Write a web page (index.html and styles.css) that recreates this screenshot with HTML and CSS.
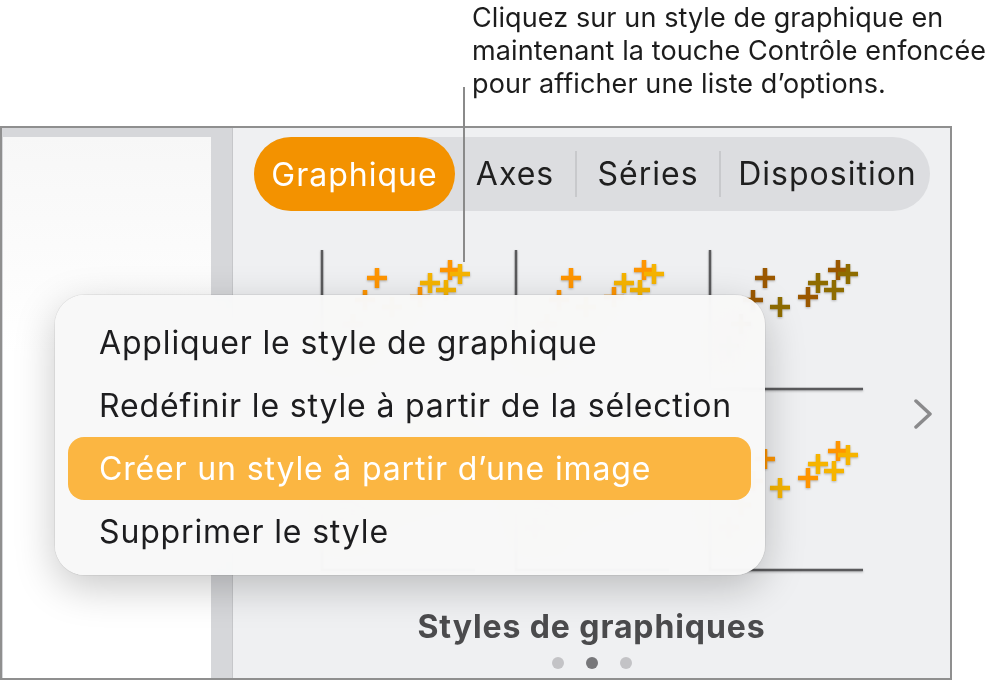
FILE: index.html
```html
<!DOCTYPE html>
<html lang="fr"><head>
    <meta charset="UTF-8">
    <title>Styles de graphiques</title>
    <link rel="stylesheet" href="styles.css">
</head>
<body>
    <svg class="defs" width="0" height="0">
        <defs>
            <path id="plus" d="M-10 0H10M0-10V10"/>
            <g id="scatter-warm" stroke-width="4.5">
                <use href="#plus" x="20" y="96" stroke="#f6b400"/>
                <use href="#plus" x="32" y="74" stroke="#ff9500"/>
                <use href="#plus" x="56" y="28" stroke="#ff9500"/>
                <use href="#plus" x="44" y="50" stroke="#ff9500"/>
                <use href="#plus" x="71" y="57" stroke="#f6b400"/>
                <use href="#plus" x="99" y="47" stroke="#ff9500"/>
                <use href="#plus" x="109" y="33" stroke="#f6b400"/>
                <use href="#plus" x="125" y="40" stroke="#f6b400"/>
                <use href="#plus" x="129" y="20" stroke="#ff9500"/>
                <use href="#plus" x="139" y="24" stroke="#f6b400"/>
            </g>
            <g id="scatter-brown" stroke-width="4.5">
                <use href="#plus" x="20" y="96" stroke="#8e6c00"/>
                <use href="#plus" x="32" y="74" stroke="#9b5800"/>
                <use href="#plus" x="56" y="28" stroke="#9b5800"/>
                <use href="#plus" x="44" y="50" stroke="#9b5800"/>
                <use href="#plus" x="71" y="57" stroke="#8e6c00"/>
                <use href="#plus" x="99" y="47" stroke="#9b5800"/>
                <use href="#plus" x="109" y="33" stroke="#8e6c00"/>
                <use href="#plus" x="125" y="40" stroke="#8e6c00"/>
                <use href="#plus" x="129" y="20" stroke="#9b5800"/>
                <use href="#plus" x="139" y="24" stroke="#8e6c00"/>
            </g>
        </defs>
    </svg>

    <div class="callout">
        <p>Cliquez sur un style de graphique en<br>maintenant la touche Contrôle enfoncée<br>pour afficher une liste d’options.</p>
    </div>
    <span class="leader"></span>

    <div class="window">
        <div class="sidebar">
            <div class="sheet"></div>
        </div>
        <div class="inspector">
            <div class="tabs">
                <span class="tab active">Graphique</span>
                <span class="tab tab-axes">Axes</span>
                <span class="sep"></span>
                <span class="tab tab-series">Séries</span>
                <span class="sep"></span>
                <span class="tab tab-layout">Disposition</span>
            </div>

            <div class="styles-row">
                <div class="style-grid">
                    <svg class="thumb" width="194" height="181"><path class="axis" d="M1 0V139H154"/><use href="#scatter-warm"/></svg>
                    <svg class="thumb" width="194" height="181"><path class="axis" d="M1 0V139H154"/><use href="#scatter-warm"/></svg>
                    <svg class="thumb" width="194" height="181"><path class="axis" d="M1 0V139H154"/><use href="#scatter-brown"/></svg>
                    <svg class="thumb" width="194" height="181"><path class="axis" d="M1 0V139H154"/><use href="#scatter-warm"/></svg>
                    <svg class="thumb" width="194" height="181"><path class="axis" d="M1 0V139H154"/><use href="#scatter-warm"/></svg>
                    <svg class="thumb" width="194" height="181"><path class="axis" d="M1 0V139H154"/><use href="#scatter-warm"/></svg>
                </div>
                <svg class="chevron" width="20" height="30" viewBox="0 0 20 30"><path d="M3 2L17 15L3 28"/></svg>
            </div>

            <h3 class="panel-title">Styles de graphiques</h3>
            <div class="dots">
                <span></span>
                <span class="on"></span>
                <span></span>
            </div>
        </div>
    </div>

    <ul class="context-menu">
        <li>Appliquer le style de graphique</li>
        <li>Redéfinir le style à partir de la sélection</li>
        <li class="selected">Créer un style à partir d’une image</li>
        <li>Supprimer le style</li>
    </ul>
</body>
</html>
```

FILE: styles.css
```css
body {
    font-family: 'Inter', 'Noto Sans', sans-serif;
    margin: 0;
    padding: 0;
    background-color: #ffffff;
    color: #1d1d1f;
    overflow: hidden;
}
.defs {
    position: absolute;
}
.callout p {
    margin: 0;
    padding: 1px 0 0 472px;
    font-size: 27px;
    line-height: 33px;
    letter-spacing: 0.1px;
    color: #1c1c1c;
}
.leader {
    position: absolute;
    left: 463px;
    top: 87px;
    width: 2px;
    height: 175px;
    background-color: #8a8a8a;
    z-index: 2;
}
.window {
    display: flex;
    box-sizing: border-box;
    width: 952px;
    height: 554px;
    margin-top: 26px;
    border: 2px solid #8f8f8f;
}
.sidebar {
    box-sizing: border-box;
    width: 231px;
    padding: 9px 21px 0 1px;
    background-color: #d6d7da;
    border-right: 1px solid #c6c7ca;
}
.sheet {
    height: 100%;
    background: linear-gradient(#f7f7f7, #ffffff 40%);
}
.inspector {
    flex: 1;
    padding-top: 9px;
    background-color: #eff0f2;
}
.tabs {
    display: flex;
    align-items: center;
    width: 676px;
    height: 74px;
    margin-left: 21px;
    border-radius: 37px;
    background-color: #dcdde0;
    font-size: 32px;
    letter-spacing: 1px;
    color: #1f1f1f;
}
.tab {
    box-sizing: border-box;
    text-align: center;
    line-height: 76px;
}
.tab.active {
    width: 201px;
    height: 74px;
    border-radius: 37px;
    background-color: #f39200;
    color: #ffffff;
}
.tab-axes {
    width: 120px;
}
.tab-series {
    width: 142px;
}
.tab-layout {
    flex: 1;
    padding-left: 4px;
}
.sep {
    width: 2px;
    height: 46px;
    background-color: #c8c9cc;
}
.styles-row {
    display: flex;
    margin: 39px 0 0 88px;
}
.style-grid {
    display: grid;
    grid-template-columns: repeat(3, 194px);
    grid-template-rows: 181px 150px;
}
.thumb {
    overflow: visible;
    filter: drop-shadow(0 1px 1px rgba(0,0,0,0.25));
}
.axis {
    fill: none;
    stroke: #5a5a5c;
    stroke-width: 2.5;
}
.chevron {
    margin: 149px 0 0 10px;
}
.chevron path {
    fill: none;
    stroke: #8a8a8c;
    stroke-width: 3.5;
    stroke-linecap: round;
    stroke-linejoin: round;
}
.panel-title {
    margin: 28px 0 0;
    font-size: 32px;
    line-height: 36px;
    font-weight: 700;
    letter-spacing: 0.9px;
    text-align: center;
    color: #4b4b4d;
}
.dots {
    display: flex;
    justify-content: center;
    gap: 22px;
    margin-top: 12px;
}
.dots span {
    width: 12px;
    height: 12px;
    border-radius: 50%;
    background-color: #c3c3c6;
}
.dots span.on {
    background-color: #77777a;
}
.context-menu {
    position: absolute;
    left: 55px;
    top: 295px;
    box-sizing: border-box;
    width: 710px;
    height: 280px;
    margin: 0;
    padding: 16px 14px 0 13px;
    list-style-type: none;
    border-radius: 30px;
    background-color: rgba(248,248,248,0.97);
    backdrop-filter: blur(30px) saturate(1.6);
    box-shadow: 0 12px 40px rgba(0,0,0,0.22), 0 0 0 1px rgba(0,0,0,0.06);
    z-index: 3;
}
.context-menu li {
    height: 63px;
    line-height: 63px;
    padding-left: 31px;
    border-radius: 16px;
    font-size: 32px;
    letter-spacing: 0.85px;
    color: #1d1d1f;
}
.context-menu li.selected {
    background-color: #fbb642;
    color: #ffffff;
}
```
